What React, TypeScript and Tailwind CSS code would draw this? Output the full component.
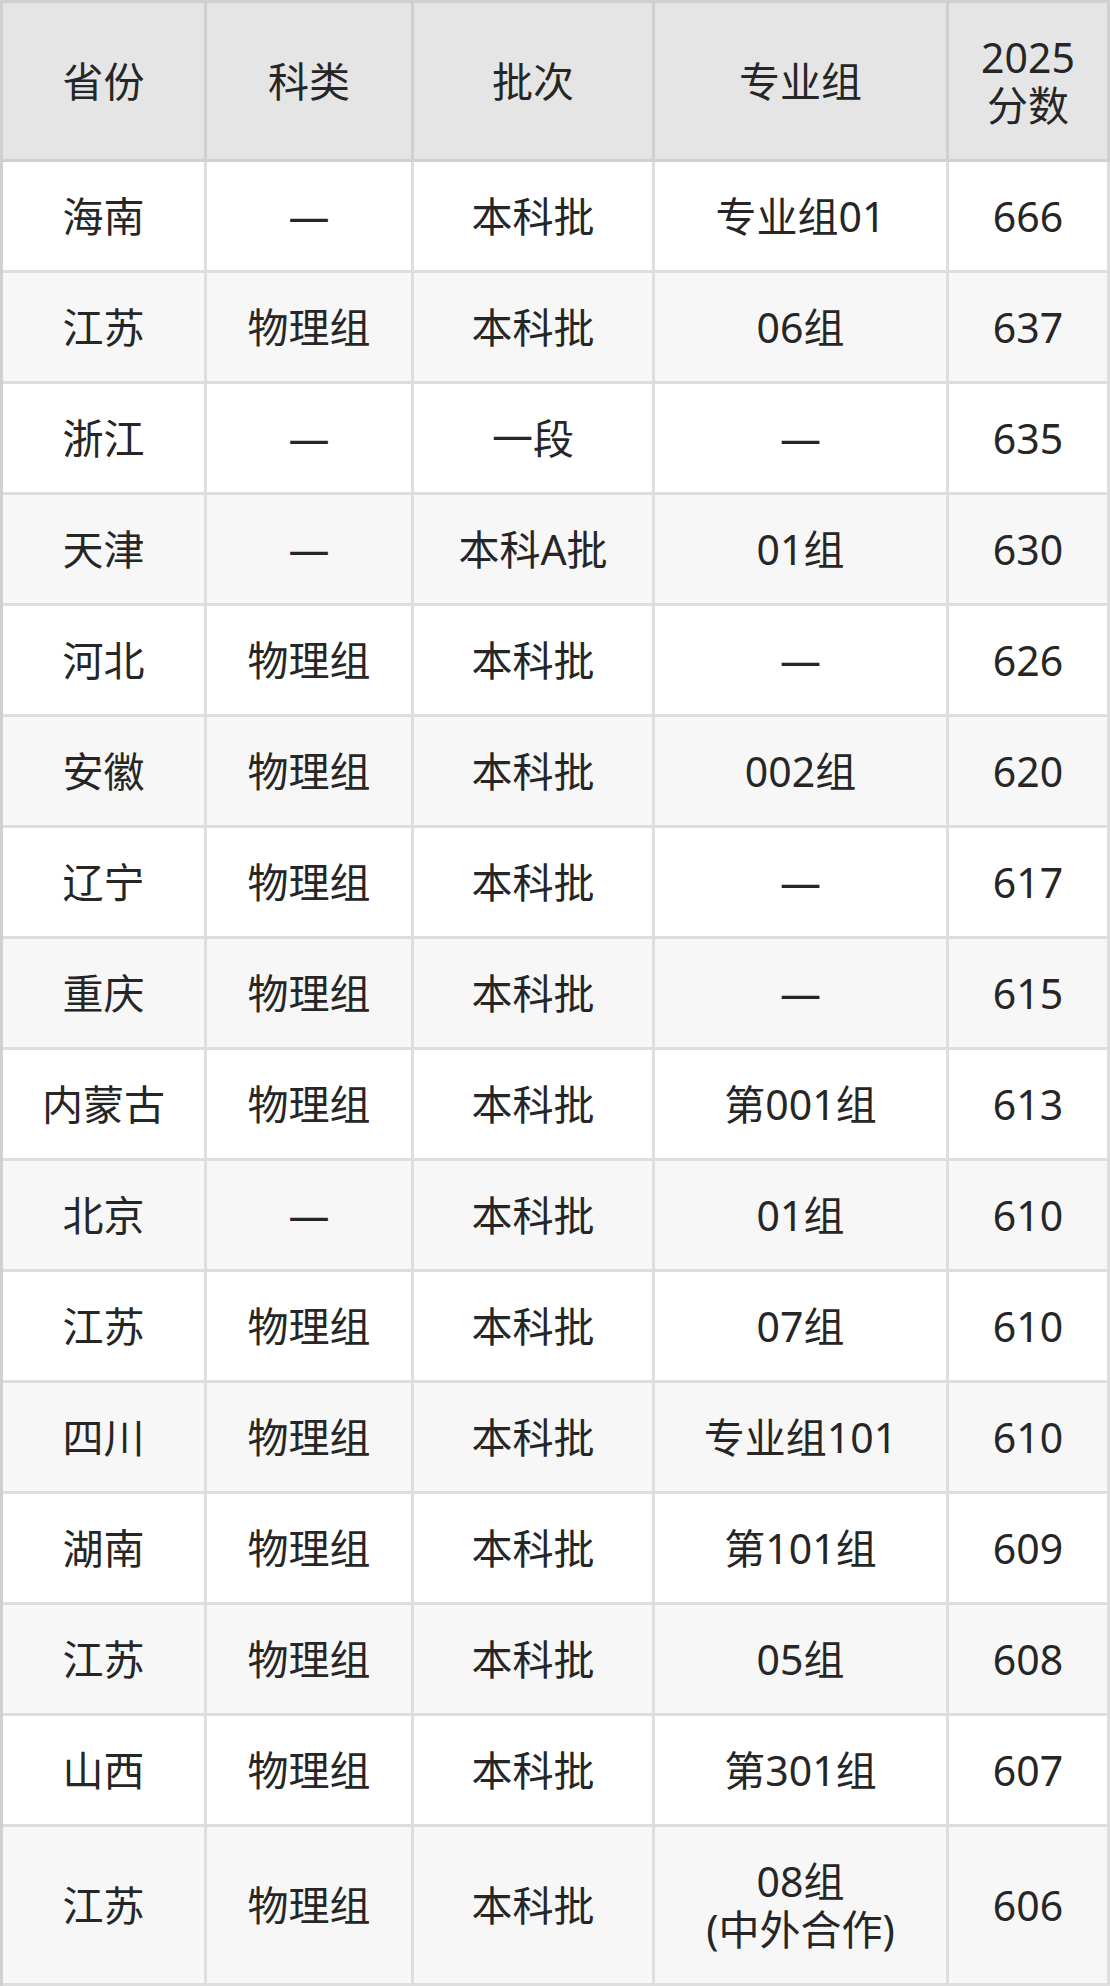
import React from "react";

const rows: string[][] = [
  ["海南", "—", "本科批", "专业组01", "666"],
  ["江苏", "物理组", "本科批", "06组", "637"],
  ["浙江", "—", "一段", "—", "635"],
  ["天津", "—", "本科A批", "01组", "630"],
  ["河北", "物理组", "本科批", "—", "626"],
  ["安徽", "物理组", "本科批", "002组", "620"],
  ["辽宁", "物理组", "本科批", "—", "617"],
  ["重庆", "物理组", "本科批", "—", "615"],
  ["内蒙古", "物理组", "本科批", "第001组", "613"],
  ["北京", "—", "本科批", "01组", "610"],
  ["江苏", "物理组", "本科批", "07组", "610"],
  ["四川", "物理组", "本科批", "专业组101", "610"],
  ["湖南", "物理组", "本科批", "第101组", "609"],
  ["江苏", "物理组", "本科批", "05组", "608"],
  ["山西", "物理组", "本科批", "第301组", "607"],
  ["江苏", "物理组", "本科批", "08组\n(中外合作)", "606"],
];

const widths = ["w-[204px]", "w-[207px]", "w-[241px]", "w-[294px]", "w-[161px]"];

export default function App() {
  return (
    <div
      className="w-[1110px] bg-white text-[41px] leading-[48px] text-[#262626]"
      style={{ fontFamily: '"Noto Sans", "Noto Sans CJK SC", sans-serif' }}
    >
      <div className="flex flex-col border-l-[3px] border-t-[3px] border-[#d0d0d0]">
        <div className="flex h-[159px] bg-[#e5e5e5]">
          {["省份", "科类", "批次", "专业组", "2025\n分数"].map((h, i) => (
            <div
              key={i}
              className={`${widths[i]} flex items-center justify-center whitespace-pre-line border-b-[3px] border-r-[3px] border-[#d0d0d0] text-center`}
            >
              {h}
            </div>
          ))}
        </div>
        {rows.map((r, ri) => (
          <div
            key={ri}
            className={`flex ${ri === rows.length - 1 ? "h-[159px]" : "h-[111px]"} ${
              ri % 2 === 0 ? "bg-white" : "bg-[#f7f7f7]"
            }`}
          >
            {r.map((c, ci) => (
              <div
                key={ci}
                className={`${widths[ci]} flex items-center justify-center whitespace-pre-line border-b-[3px] border-r-[3px] border-[#dedede] text-center`}
              >
                {c}
              </div>
            ))}
          </div>
        ))}
      </div>
    </div>
  );
}
